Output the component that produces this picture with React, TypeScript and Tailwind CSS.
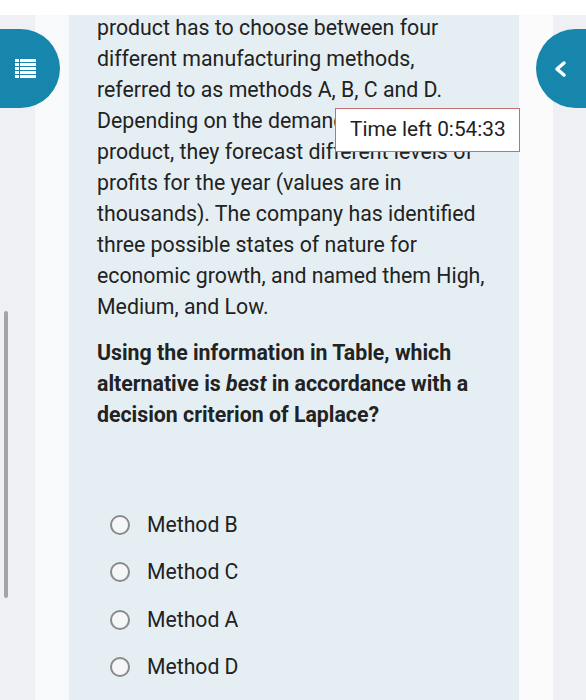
import React from 'react';

const bodyLines = [
  'product has to choose between four',
  'different manufacturing methods,',
  'referred to as methods A, B, C and D.',
  'Depending on the demand for the',
  'product, they forecast different levels of',
  'profits for the year (values are in',
  'thousands). The company has identified',
  'three possible states of nature for',
  'economic growth, and named them High,',
  'Medium, and Low.',
];

const options = ['Method B', 'Method C', 'Method A', 'Method D'];

const ListIcon: React.FC = () => (
  <svg width="21" height="20" viewBox="0 0 21 20" fill="#ffffff">
    {[0, 4, 8, 12, 16].map((y) => (
      <g key={y}>
        <rect x="0" y={y} width="4" height="3" />
        <rect x="5" y={y} width="16" height="3" />
      </g>
    ))}
  </svg>
);

const App: React.FC = () => {
  return (
    <div
      className="relative w-[586px] h-[700px] overflow-hidden bg-white text-[#222222]"
      style={{ fontFamily: 'Roboto, "Liberation Sans", sans-serif' }}
    >
      <div className="h-[15px] bg-white" />
      <div className="flex h-[685px]">
        <div className="w-[35px] bg-[#eff0f4]" />
        <div className="w-[34px] bg-[#f8f9fa]" />

        {/* Question panel */}
        <div className="w-[450px] bg-[#e5eff3] pl-[28px]">
          <div className="-mt-[3px] text-[21.3px] leading-[31px] whitespace-nowrap">
            {bodyLines.map((line) => (
              <div key={line}>{line}</div>
            ))}
          </div>

          <div className="mt-[15px] text-[21.3px] leading-[31px] font-bold whitespace-nowrap">
            <div>Using the information in Table, which</div>
            <div>
              alternative is <em>best</em> in accordance with a
            </div>
            <div>decision criterion of Laplace?</div>
          </div>

          <div className="mt-[85px] pl-[13px] flex flex-col gap-[27.3px]">
            {options.map((opt) => (
              <label key={opt} className="flex items-center h-[20px] text-[21.2px]">
                <span className="shrink-0 w-[20px] h-[20px] rounded-full border-2 border-[#8a8a8a] bg-[#f4f6f7]" />
                <span className="ml-[17px]">{opt}</span>
              </label>
            ))}
          </div>
        </div>

        <div className="w-[34px] bg-[#fbfbfc]" />
        <div className="flex-1 bg-[#eff0f4]" />
      </div>

      {/* Left menu button */}
      <div className="absolute left-0 top-[29px] w-[60px] h-[79px] rounded-r-full bg-[#1786ac] flex items-center justify-center pr-[9px]">
        <ListIcon />
      </div>

      {/* Right back button */}
      <div className="absolute left-[536px] top-[29px] w-[80px] h-[79px] rounded-l-full bg-[#1786ac] flex items-center pl-[17px]">
        <svg width="14" height="18" viewBox="0 0 14 18" fill="none">
          <path d="M11 3 L4 9 L11 15" stroke="#ffffff" strokeWidth="3.5" strokeLinecap="round" strokeLinejoin="round" />
        </svg>
      </div>

      {/* Timer */}
      <div className="absolute left-[335px] top-[108px] w-[185px] h-[44px] bg-white border-[1.5px] border-[#c46f6f] flex items-center pl-[14px] text-[20.8px] text-[#222222]">
        Time left 0:54:33
      </div>

      {/* Scrollbar */}
      <div className="absolute left-[4px] top-[311px] w-[4px] h-[287px] rounded-full bg-[#a3a3a8]" />
    </div>
  );
};

export default App;
